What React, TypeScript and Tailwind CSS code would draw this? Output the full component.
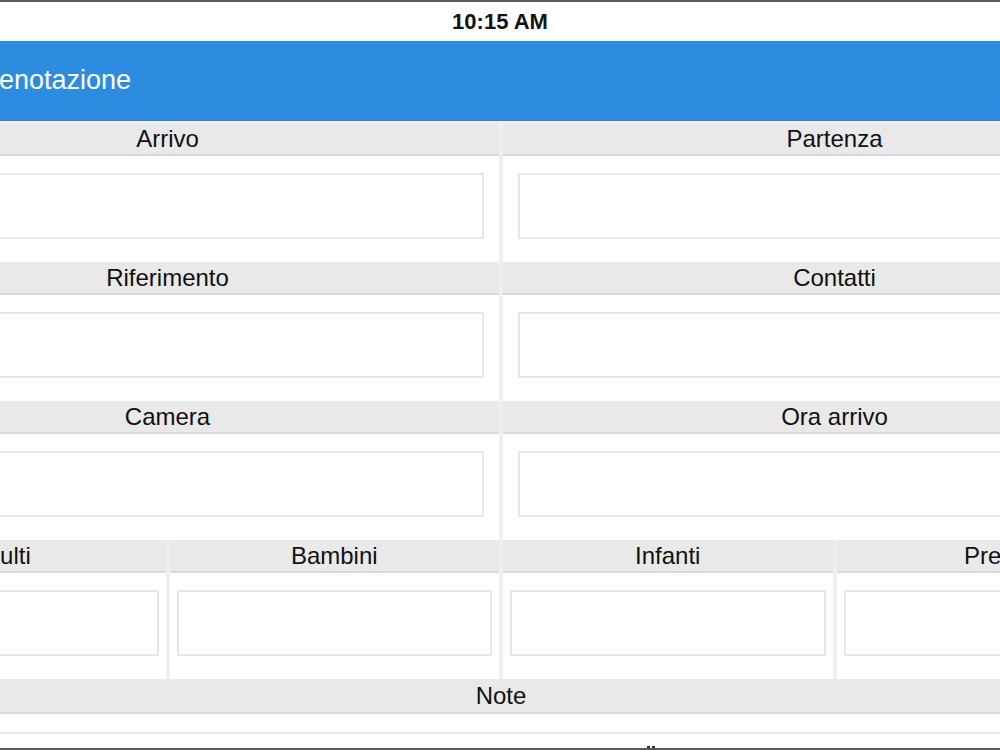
const twoCol = [
  ['Arrivo', 'Partenza'],
  ['Riferimento', 'Contatti'],
  ['Camera', 'Ora arrivo'],
]

const fourCol = ['Adulti', 'Bambini', 'Infanti', 'Prezzo']

function Field({ label, inset }: { label: string; inset: string }) {
  return (
    <div className="flex flex-col bg-white">
      <div className="flex h-[33px] items-center justify-center border-b-2 border-[#d9d9d9] bg-[#e9e9e9] text-[24px] leading-none text-[#111]">
        {label}
      </div>
      <div className={`h-[106px] pt-[17px] ${inset}`}>
        <div className="h-[66px] border-2 border-[#e6e6e6] bg-white" />
      </div>
    </div>
  )
}

export default function App() {
  return (
    <div
      className="relative flex h-[750px] w-[1000px] flex-col overflow-hidden border-y-2 border-[#5a5a5a] bg-white"
      style={{ fontFamily: '"Liberation Sans", Arial, sans-serif' }}
    >
      <div className="flex h-[39px] shrink-0 items-center justify-center bg-white">
        <span className="text-[22px] font-bold text-[#111]">10:15 AM</span>
      </div>

      <div className="flex h-[80px] shrink-0 items-center border-b border-[#2a80d2] bg-[#2d8ce0]">
        <h1 className="ml-[-28px] text-[27px] text-white">Prenotazione</h1>
      </div>

      <div className="ml-[-164px] flex w-[1330px] flex-1 flex-col overflow-hidden bg-[#efefef] pt-[2px]">
        {twoCol.map((row) => (
          <div key={row[0]} className="grid grid-cols-2 gap-x-[4px]">
            {row.map((label) => (
              <Field key={label} label={label} inset="px-[15px]" />
            ))}
          </div>
        ))}

        <div className="grid grid-cols-4 gap-x-[4px]">
          {fourCol.map((label) => (
            <Field key={label} label={label} inset="px-[7px]" />
          ))}
        </div>

        <div className="flex flex-1 flex-col bg-white">
          <div className="flex h-[35px] shrink-0 items-center justify-center border-b-2 border-[#d9d9d9] bg-[#e9e9e9] text-[24px] leading-none text-[#111]">
            Note
          </div>
          <div className="flex-1 px-[15px] pt-[18px]">
            <div className="h-[40px] border-2 border-[#e6e6e6] bg-white" />
          </div>
        </div>
      </div>

      <div className="absolute bottom-[-2px] left-[647px] flex gap-[2px]">
        <span className="h-[4px] w-[3px] bg-[#333]" />
        <span className="h-[4px] w-[3px] bg-[#333]" />
      </div>
    </div>
  )
}
